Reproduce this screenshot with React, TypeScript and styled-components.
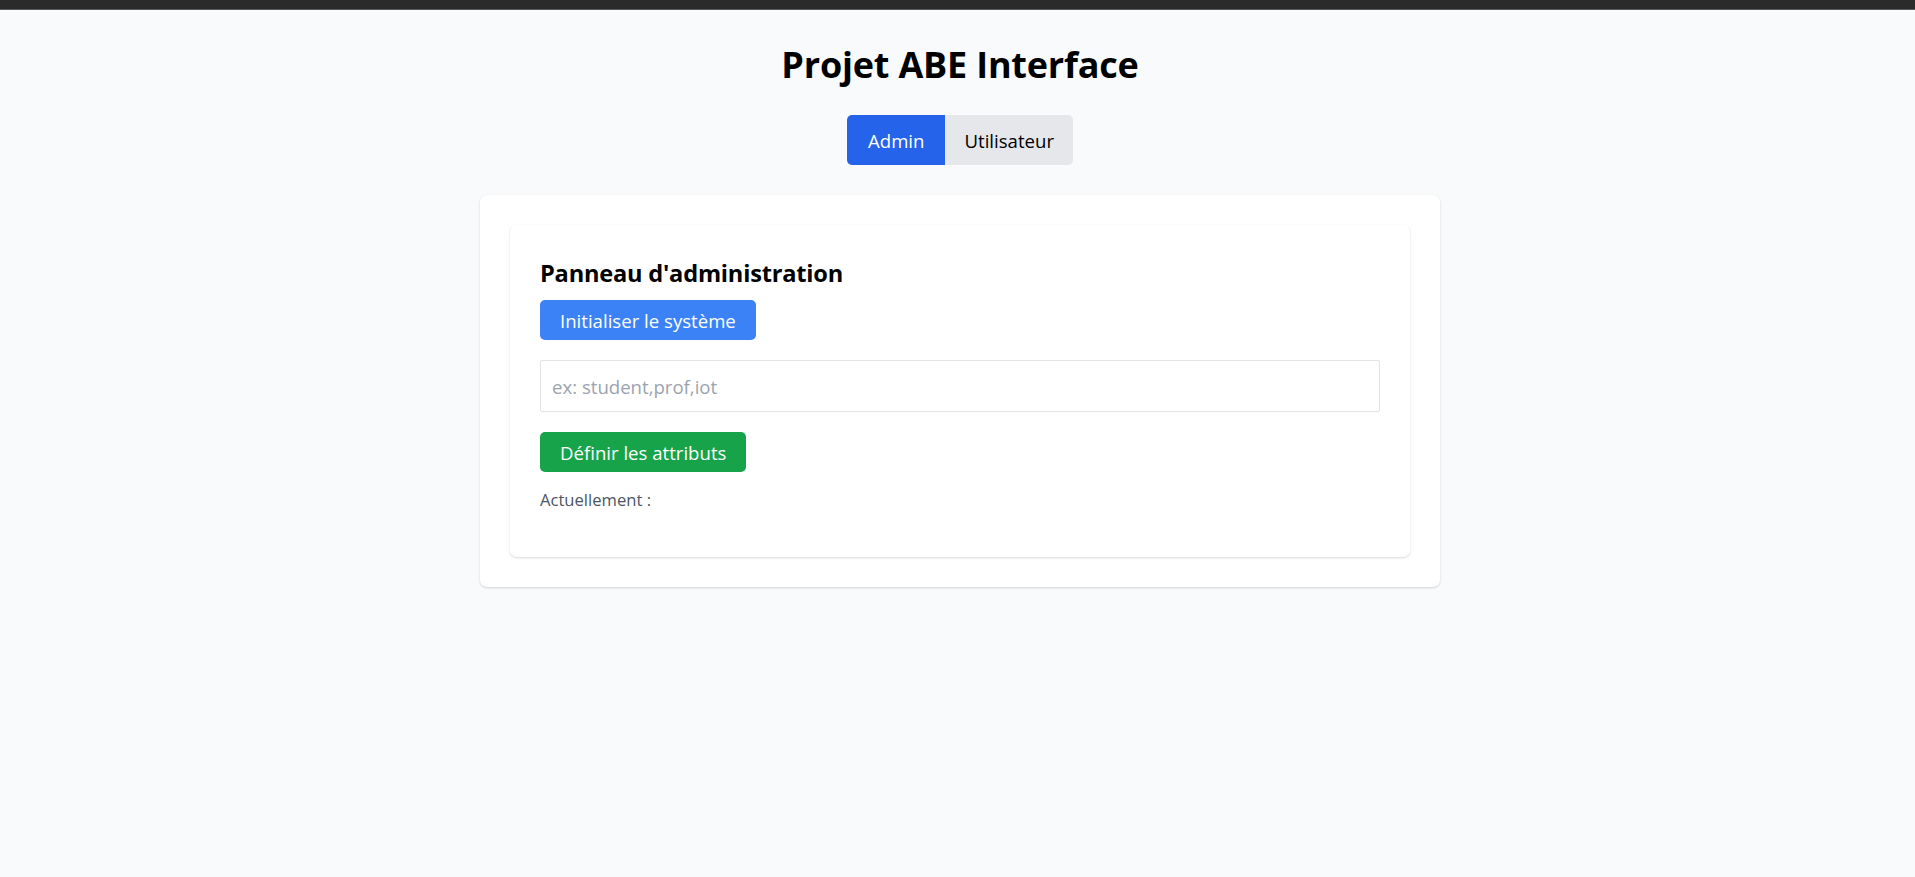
import React from "react";
import styled, { createGlobalStyle } from "styled-components";

const Global = createGlobalStyle`
  html, body { margin: 0; padding: 0; background: #f9fafb; }
  body { font-family: "Open Sans", "Noto Sans", sans-serif; color: #000; }
  * { box-sizing: border-box; }
`;

const TopBar = styled.div`
  height: 10px;
  background: #2b2b2b;
  border-bottom: 1px solid #5a5a5a;
`;

const Page = styled.main`
  display: flex;
  flex-direction: column;
  align-items: center;
  padding: 35px 0 0 5px;
  min-height: calc(100vh - 10px);
`;

const Title = styled.h1`
  margin: 0;
  font-size: 36px;
  line-height: 40px;
  font-weight: 700;
  letter-spacing: -0.2px;
`;

const Tabs = styled.div`
  display: flex;
  margin-top: 30px;
  border-radius: 5px;
  overflow: hidden;
`;

const Tab = styled.button<{ $active?: boolean }>`
  height: 50px;
  padding: 0 ${(p) => (p.$active ? "21px" : "19px")};
  border: none;
  font-family: inherit;
  font-size: 18.6px;
  background: ${(p) => (p.$active ? "#2563eb" : "#e5e7eb")};
  color: ${(p) => (p.$active ? "#fff" : "#000")};
  cursor: pointer;
`;

const OuterCard = styled.section`
  width: 960px;
  margin-top: 30px;
  padding: 30px;
  background: #fff;
  border-radius: 7px;
  box-shadow: 0 1px 3px rgba(0, 0, 0, 0.1), 0 1px 2px rgba(0, 0, 0, 0.06);
`;

const Panel = styled.div`
  display: flex;
  flex-direction: column;
  align-items: flex-start;
  padding: 32px 30px 45px;
  background: #fff;
  border-radius: 7px;
  box-shadow: 0 1px 3px rgba(0, 0, 0, 0.1), 0 1px 2px rgba(0, 0, 0, 0.06);
`;

const PanelTitle = styled.h2`
  margin: 0 0 11px;
  font-size: 23.6px;
  line-height: 32px;
  font-weight: 700;
  letter-spacing: -0.2px;
`;

const ActionButton = styled.button<{ $color: string }>`
  height: 40px;
  padding: 0 20px;
  border: none;
  border-radius: 5px;
  background: ${(p) => p.$color};
  color: #fff;
  font-family: inherit;
  font-size: 18.6px;
  cursor: pointer;
`;

const Input = styled.input`
  width: 100%;
  height: 52px;
  margin: 20px 0;
  padding: 0 11px;
  border: 1px solid #e2e4e8;
  border-radius: 2px;
  font-family: inherit;
  font-size: 18.6px;
  color: #111;
  outline: none;
  &::placeholder { color: #9ca3af; }
`;

const Status = styled.p`
  margin: 16px 0 0;
  font-size: 16.6px;
  line-height: 24px;
  color: #4b5563;
`;

export default function App() {
  return (
    <>
      <Global />
      <TopBar />
      <Page>
        <Title>Projet ABE Interface</Title>
        <Tabs>
          <Tab $active>Admin</Tab>
          <Tab>Utilisateur</Tab>
        </Tabs>
        <OuterCard>
          <Panel>
            <PanelTitle>Panneau d'administration</PanelTitle>
            <ActionButton $color="#3b82f6">Initialiser le système</ActionButton>
            <Input placeholder="ex: student,prof,iot" />
            <ActionButton $color="#16a34a">Définir les attributs</ActionButton>
            <Status>Actuellement :</Status>
          </Panel>
        </OuterCard>
      </Page>
    </>
  );
}
